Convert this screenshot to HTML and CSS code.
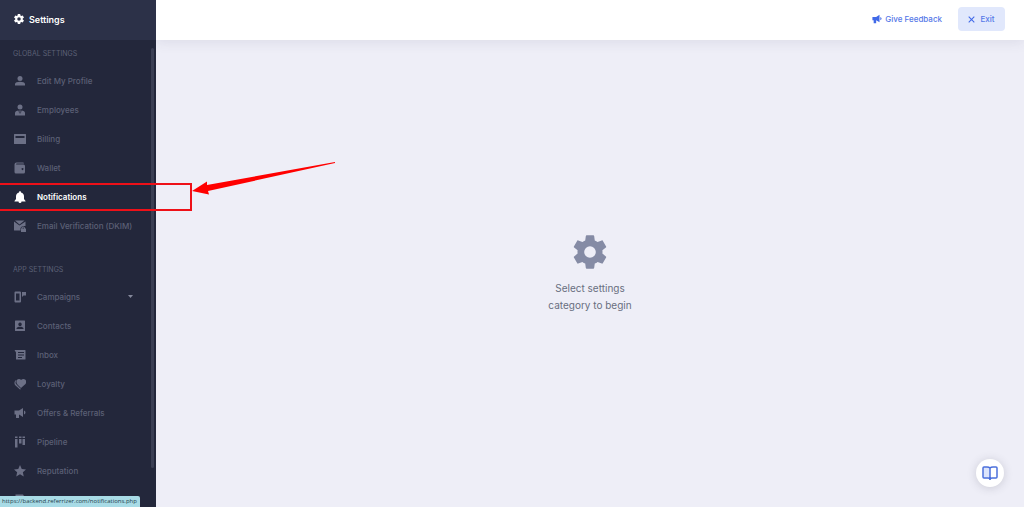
FILE: index.html
```
<!DOCTYPE html>
<html lang="en">
<head>
  <meta charset="UTF-8" />
  <title>Settings</title>
  <link rel="stylesheet" href="styles.css">
</head>
<body>

  <svg class="sprite" aria-hidden="true">
    <symbol id="cog" viewBox="0 0 24 24">
      <path d="M12,15.5A3.5,3.5 0 0,1 8.5,12A3.5,3.5 0 0,1 12,8.5A3.5,3.5 0 0,1 15.5,12A3.5,3.5 0 0,1 12,15.5M19.43,12.97C19.47,12.65 19.5,12.33 19.5,12C19.5,11.67 19.47,11.34 19.43,11L21.54,9.37C21.73,9.22 21.78,8.95 21.66,8.73L19.66,5.27C19.54,5.05 19.27,4.96 19.05,5.05L16.56,6.05C16.04,5.66 15.5,5.32 14.87,5.07L14.5,2.42C14.46,2.18 14.25,2 14,2H10C9.75,2 9.54,2.18 9.5,2.42L9.13,5.07C8.5,5.32 7.96,5.66 7.44,6.05L4.95,5.05C4.73,4.96 4.46,5.05 4.34,5.27L2.34,8.73C2.21,8.95 2.27,9.22 2.46,9.37L4.57,11C4.53,11.34 4.5,11.67 4.5,12C4.5,12.33 4.53,12.65 4.57,12.97L2.46,14.63C2.27,14.78 2.21,15.05 2.34,15.27L4.34,18.73C4.46,18.95 4.73,19.03 4.95,18.95L7.44,17.94C7.96,18.34 8.5,18.68 9.13,18.93L9.5,21.58C9.54,21.82 9.75,22 10,22H14C14.25,22 14.46,21.82 14.5,21.58L14.87,18.93C15.5,18.67 16.04,18.34 16.56,17.94L19.05,18.95C19.27,19.03 19.54,18.95 19.66,18.73L21.66,15.27C21.78,15.05 21.73,14.78 21.54,14.63L19.43,12.97Z"/>
    </symbol>
    <symbol id="bullhorn" viewBox="0 0 24 24">
      <path d="M1 7h9l8-5v18l-8-5v7H4v-7H1zM20 7q3 1 3 4t-3 4z"/>
    </symbol>
  </svg>

  <div class="app">
    <aside class="sidebar">
      <div class="sidebar-title">
        <svg class="title-icon"><use href="#cog"/></svg>
        <span>Settings</span>
      </div>

      <nav class="menu">
        <h2 class="menu-heading">GLOBAL SETTINGS</h2>
        <ul class="menu-list">
          <li><a class="menu-link" href="#profile">
            <svg class="icon" viewBox="0 0 24 24"><circle cx="12" cy="7" r="5"/><path d="M2 21v-3c0-3 5-4.500 10-4.500s10 1.500 10 4.500v3z"/></svg>
            Edit My Profile</a></li>
          <li><a class="menu-link" href="#employees">
            <svg class="icon" viewBox="0 0 24 24"><circle cx="12" cy="6" r="5"/><path d="M2 23v-5c0-3 3-4.500 7-5l1.500 7 .8-4-1-3h3.400l-1 3 .8 4L15 13c4 .5 7 2 7 5v5z"/></svg>
            Employees</a></li>
          <li><a class="menu-link" href="#billing">
            <svg class="icon" viewBox="0 0 24 24"><path fill-rule="evenodd" d="M1 2h22q1 0 1 1v18q0 1-1 1H1q-1 0-1-1V3q0-1 1-1zM3 6v4h18V6z"/></svg>
            Billing</a></li>
          <li><a class="menu-link" href="#wallet">
            <svg class="icon" viewBox="0 0 24 24"><path fill-rule="evenodd" d="M5 1h13q2 0 2 2H6q-2 0-2 1t2 1h13q3 0 3 3v12q0 3-3 3H4q-3 0-3-3V5q0-4 4-4zM17 12a2 2 0 1 0 .1 0z"/></svg>
            Wallet</a></li>
          <li><a class="menu-link active" href="#notifications">
            <svg class="icon" viewBox="0 0 24 24"><path d="M12 0q2 0 2 3c4 1 6 4 6 8v5l3 4v1H1v-1l3-4v-5c0-4 2-7 6-8q0-3 2-3zM9 21h6q0 3-3 3t-3-3z"/></svg>
            Notifications</a></li>
          <li><a class="menu-link" href="#dkim">
            <svg class="icon" viewBox="0 0 24 24"><path d="M0 3l11 8 12-8v9q-8-1-10 4v5H1q-1 0-1-1z"/><path d="M2 1h19l-10 8z"/><path fill-rule="evenodd" d="M15 17v-1q0-3 3.500-3t3.500 3v1h2v7h-10v-7zM17 17h3v-1q0-1-1.500-1T17 16z"/></svg>
            Email Verification (DKIM)</a></li>
        </ul>

        <h2 class="menu-heading">APP SETTINGS</h2>
        <ul class="menu-list">
          <li><a class="menu-link" href="#campaigns">
            <svg class="icon" viewBox="0 0 24 24"><path fill-rule="evenodd" d="M3 1h9q2 0 2 2v18q0 2-2 2H3q-2 0-2-2V3q0-2 2-2zM4 5v14h7V5z"/><path d="M16 2h8v7h-5l-3 3z"/></svg>
            Campaigns
            <svg class="caret" viewBox="0 0 10 6"><path d="M0 0h10L5 6z"/></svg></a></li>
          <li><a class="menu-link" href="#contacts">
            <svg class="icon" viewBox="0 0 24 24"><path fill-rule="evenodd" d="M3 1h18q1 0 1 1v19q0 1-1 1H3q-1 0-1-1V2q0-1 1-1zM12 5a3.500 3.500 0 1 0 .1 0zM5 18h14v-1c0-5-14-5-14 0z"/></svg>
            Contacts</a></li>
          <li><a class="menu-link" href="#inbox">
            <svg class="icon" viewBox="0 0 24 24"><path fill-rule="evenodd" d="M1 2h21q1 0 1 1v17q0 1-1 1H5q-1 0-1-1V7zM8 6v2h12V6zM8 11v2h12v-2zM8 16v2h8v-2z"/></svg>
            Inbox</a></li>
          <li><a class="menu-link" href="#loyalty">
            <svg class="icon" viewBox="0 0 24 24"><path d="M14 20L7 13C3 8 5 2 10 2q3 0 4 2 2-2 5-2c5 0 7 6 4 10z"/><path d="M4 4C0 7 0 12 3 15l9 8 2-1-9-9C2 10 3 7 5 4z"/></svg>
            Loyalty</a></li>
          <li><a class="menu-link" href="#offers">
            <svg class="icon"><use href="#bullhorn"/></svg>
            Offers &amp; Referrals</a></li>
          <li><a class="menu-link" href="#pipeline">
            <svg class="icon" viewBox="0 0 24 24"><path d="M2 1h5v3H2zM10 1h5v3h-5zM17 1h5v3h-5zM2 6h5v17H2zM10 6h5v9h-5zM17 6h5v12h-5z"/></svg>
            Pipeline</a></li>
          <li><a class="menu-link" href="#reputation">
            <svg class="icon" viewBox="0 0 24 24"><path d="M12 0l3.500 8 8.500.8-6.300 5.600L19.500 23 12 18.500 4.500 23l1.800-8.600L0 8.800 8.500 8z"/></svg>
            Reputation</a></li>
          <li><a class="menu-link" href="#tags" aria-label="Tags">
            <svg class="icon" viewBox="0 0 24 24"><path fill-rule="evenodd" d="M3 1h15l4 6v15H3zM6 4v3h11V4z"/></svg></a></li>
        </ul>
      </nav>
      <div class="scroll-thumb"></div>
    </aside>

    <div class="content">
      <header class="topbar">
        <a class="feedback" href="#feedback">
          <svg class="small-icon"><use href="#bullhorn"/></svg>
          Give Feedback
        </a>
        <button class="exit" type="button">
          <svg class="close-icon" viewBox="0 0 10 10"><path d="M1 1l8 8M9 1l-8 8"/></svg>
          Exit
        </button>
      </header>

      <main class="empty">
        <svg class="empty-icon"><use href="#cog"/></svg>
        <p class="empty-text">Select settings<br>category to begin</p>
      </main>
    </div>
  </div>

  <button class="guide" type="button" aria-label="Guide">
    <svg class="guide-icon" viewBox="0 0 16 16"><path class="page-fill" d="M1 2h5q2 0 2 1v10H1z"/><path d="M8 3Q7 2 5 2H2Q1 2 1 3v9q0 1 1 1h4q2 0 2 2 0-2 2-2h4q1 0 1-1V3q0-1-1-1h-3Q9 2 8 3zv11"/></svg>
  </button>

  <div class="highlight"></div>
  <svg class="arrow" viewBox="0 0 144 34"><path d="M0 29L15 19.500V23L143 0v1L16 29l1 3.500z"/></svg>
  <div class="status">https://backend.referrizer.com/notifications.php</div>

</body>
</html>
```

FILE: styles.css
```
* {
  box-sizing: border-box;
}

body {
  margin: 0;
  background-color: #eeeef7;
  color: #696e80;
  font-family: Inter, sans-serif;
  font-size: 8px;
}

.sprite {
  display: none;
}

.app {
  display: flex;
  height: 100vh;
}

.sidebar {
  position: relative;
  flex: 0 0 156px;
  overflow: hidden;
  background-color: #23273b;
}

.sidebar-title {
  display: flex;
  align-items: center;
  gap: 4px;
  height: 40px;
  padding: 0 13px 2px;
  background-color: #2c3148;
  color: white;
  font-size: 9px;
  font-weight: 600;
}

.title-icon {
  width: 12px;
  height: 12px;
  fill: white;
}

.menu-heading {
  margin: 0;
  padding: 9px 13px 7px;
  color: #5c6076;
  font-size: 7px;
  font-weight: 400;
  line-height: 10px;
}

.menu-list {
  margin: 0 0 16px;
  padding: 0;
  list-style: none;
}

.menu-link {
  display: flex;
  align-items: center;
  height: 29px;
  padding: 0 23px 0 14px;
  color: #5c6076;
  font-weight: 500;
  text-decoration: none;
}

.icon {
  width: 12px;
  height: 12px;
  margin-right: 11px;
  fill: #6c7086;
}

.active {
  color: white;
  font-weight: 600;
}

.active .icon {
  fill: white;
}

.caret {
  width: 5px;
  height: 3px;
  margin-left: auto;
  fill: #85899c;
}

.scroll-thumb {
  position: absolute;
  top: 48px;
  right: 2px;
  bottom: 39px;
  width: 3px;
  border-radius: 2px;
  background-color: #3b3f54;
}

.content {
  display: flex;
  flex: 1;
  flex-direction: column;
}

.topbar {
  display: flex;
  align-items: center;
  justify-content: flex-end;
  gap: 16px;
  height: 40px;
  padding: 0 19px 2px;
  background-color: white;
  box-shadow: 0 2px 12px rgba(60, 60, 100, 0.1);
}

.feedback {
  display: flex;
  align-items: center;
  gap: 3px;
  color: #5578e8;
  font-weight: 500;
  text-decoration: none;
}

.small-icon {
  width: 10px;
  height: 10px;
  fill: #4069e8;
}

.exit {
  display: flex;
  align-items: center;
  justify-content: center;
  gap: 5px;
  width: 47px;
  height: 24px;
  padding: 0;
  border: none;
  border-radius: 4px;
  background-color: #e1e8fc;
  color: #5578e8;
  font: inherit;
  font-weight: 500;
  cursor: pointer;
}

.close-icon {
  width: 7px;
  height: 7px;
  fill: none;
  stroke: #4069e8;
  stroke-width: 1.5;
}

.empty {
  display: flex;
  flex: 1;
  flex-direction: column;
  align-items: center;
  justify-content: center;
  padding-bottom: 2px;
}

.empty-icon {
  width: 40px;
  height: 40px;
  fill: #858ba5;
}

.empty-text {
  margin: 8px 0 0;
  font-size: 10px;
  line-height: 17px;
  text-align: center;
}

.guide {
  position: absolute;
  right: 20px;
  bottom: 20px;
  display: flex;
  align-items: center;
  justify-content: center;
  width: 28px;
  height: 28px;
  padding: 0;
  border: none;
  border-radius: 50%;
  background-color: white;
  box-shadow: 0 1px 10px rgba(60, 60, 80, 0.2);
  cursor: pointer;
}

.guide-icon {
  width: 16px;
  height: 16px;
  fill: none;
  stroke: #4c70dc;
  stroke-width: 1.5;
}

.guide-icon .page-fill {
  fill: #dce4fb;
  stroke: none;
}

.highlight {
  position: absolute;
  top: 183px;
  left: -2px;
  width: 194px;
  height: 28px;
  border: 2px solid #ee1018;
}

.arrow {
  position: absolute;
  top: 162px;
  left: 192px;
  width: 144px;
  height: 34px;
  fill: red;
}

.status {
  position: absolute;
  bottom: 0;
  left: 0;
  padding: 0 3px 0 2px;
  border-radius: 0 2px 0 0;
  background-color: #a8dbe6;
  color: #24414c;
  font-family: "Open Sans", sans-serif;
  font-size: 6px;
  line-height: 11px;
}
```
